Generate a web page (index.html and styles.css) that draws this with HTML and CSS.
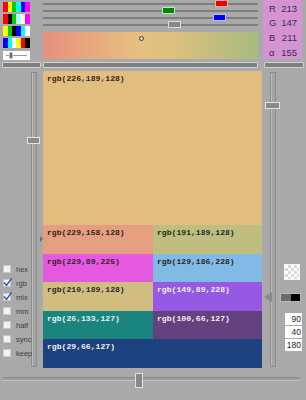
FILE: index.html
```html
<!DOCTYPE html>
<html lang="en">
<head>
  <meta charset="UTF-8" />
  <title>Color Mixer</title>
  <link rel="stylesheet" href="styles.css">
</head>
<body>
<div class="app">
  <div class="top">
    <div class="swatches">
      <div class="swatch sw1"></div>
      <div class="swatch sw2"></div>
      <div class="swatch sw3"></div>
      <div class="swatch sw4"></div>
      <div class="mini-slider">
        <span class="mini-thumb"></span>
      </div>
    </div>

    <div class="mixer">
      <div class="track-row"><span class="hthumb red" style="left: 172px"></span></div>
      <div class="track-row"><span class="hthumb green" style="left: 119px"></span></div>
      <div class="track-row"><span class="hthumb blue" style="left: 170px"></span></div>
      <div class="track-row"><span class="hthumb gray" style="left: 125px"></span></div>
      <div class="gradient">
        <span class="marker" style="left: 96px; top: 4px"></span>
      </div>
    </div>

    <div class="info">
      <div class="info-row"><span>R</span><span>213</span></div>
      <div class="info-row"><span>G</span><span>147</span></div>
      <div class="info-row"><span>B</span><span>211</span></div>
      <div class="info-row"><span>&alpha;</span><span>155</span></div>
    </div>
  </div>

  <div class="scrolls">
    <div class="sbar sbar-left"></div>
    <div class="sbar sbar-mid"></div>
    <div class="sbar sbar-right"></div>
  </div>

  <div class="middle">
    <div class="side side-left">
      <div class="options">
        <label class="opt"><span class="box"></span>hex</label>
        <label class="opt"><span class="box"><svg width="9" height="9" viewBox="0 0 9 9"><polyline points="1,4.5 3.5,7.5 8.5,0.5" /></svg></span>rgb</label>
        <label class="opt"><span class="box"><svg width="9" height="9" viewBox="0 0 9 9"><polyline points="1,4.5 3.5,7.5 8.5,0.5" /></svg></span>mix</label>
        <label class="opt"><span class="box"></span>mm</label>
        <label class="opt"><span class="box"></span>half</label>
        <label class="opt"><span class="box"></span>sync</label>
        <label class="opt"><span class="box"></span>keep</label>
      </div>
      <div class="vslider">
        <div class="vtrack"></div>
        <span class="vthumb" style="top: 66px"></span>
      </div>
      <span class="pointer-small"></span>
    </div>

    <div class="blocks">
      <div class="block wide big" style="background: rgb(226,189,128)">rgb(226,189,128)</div>
      <div class="block" style="background: rgb(229,158,128)">rgb(229,158,128)</div>
      <div class="block" style="background: rgb(191,189,128)">rgb(191,189,128)</div>
      <div class="block" style="background: rgb(229,89,225)">rgb(229,89,225)</div>
      <div class="block" style="background: rgb(129,186,228)">rgb(129,186,228)</div>
      <div class="block" style="background: rgb(210,189,128)">rgb(210,189,128)</div>
      <div class="block light" style="background: rgb(149,89,228)">rgb(149,89,228)</div>
      <div class="block light" style="background: rgb(26,133,127)">rgb(26,133,127)</div>
      <div class="block light" style="background: rgb(100,66,127)">rgb(100,66,127)</div>
      <div class="block light wide" style="background: rgb(29,66,127)">rgb(29,66,127)</div>
    </div>

    <div class="side side-right">
      <div class="vslider vslider-right">
        <div class="vtrack"></div>
        <span class="vthumb" style="top: 31px"></span>
      </div>
      <span class="pointer"></span>
      <div class="tools">
        <div class="checker"></div>
        <div class="toggle"><span class="tg-off"></span><span class="tg-on"></span></div>
        <div class="num">90</div>
        <div class="num">40</div>
        <div class="num">180</div>
      </div>
    </div>
  </div>

  <div class="bottom">
    <div class="htrack">
      <span class="bthumb" style="left: 132px"></span>
    </div>
  </div>
</div>
</body>
</html>
```

FILE: styles.css
```css
* {
  box-sizing: border-box;
}

body {
  margin: 0;
  background: #a9a9a9;
  font-family: "Liberation Sans", Arial, sans-serif;
  width: 306px;
  height: 400px;
  overflow: hidden;
}

.app {
  display: flex;
  flex-direction: column;
  height: 400px;
}

/* top strip: palettes, rgb sliders, readout */
.top {
  display: flex;
  height: 60px;
}

.swatches {
  width: 43px;
  flex-shrink: 0;
  padding: 2px 0 0 3px;
  display: flex;
  flex-direction: column;
  gap: 2px;
}

.swatch {
  width: 27px;
  height: 10px;
}

.sw1 {
  background: linear-gradient(to right, #f00 0 17%, #ff0 17% 33%, #0c0 33% 50%, #0ff 50% 67%, #00f 67% 83%, #f0f 83%);
}

.sw2 {
  background: linear-gradient(to right, #f00 0 17%, #000 17% 33%, #0c0 33% 50%, #bff 50% 67%, #fff 67% 83%, #f0f 83%);
}

.sw3 {
  background: linear-gradient(to right, #ff0 0 17%, #0c0 17% 33%, #000 33% 50%, #00f 50% 67%, #0ff 67% 83%, #fff 83%);
}

.sw4 {
  background: linear-gradient(to right, #00f 0 17%, #0ff 17% 33%, #fff 33% 50%, #ff0 50% 67%, #f00 67% 83%, #000 83%);
}

.mini-slider {
  width: 27px;
  height: 9px;
  margin-top: 1px;
  background: #fff;
  position: relative;
}

.mini-slider::before {
  content: "";
  position: absolute;
  left: 3px;
  right: 3px;
  top: 4px;
  height: 1px;
  background: #999;
}

.mini-thumb {
  position: absolute;
  left: 6px;
  top: 1px;
  width: 4px;
  height: 7px;
  background: #666;
  border: 1px solid #ccc;
}

.mixer {
  width: 215px;
  flex-shrink: 0;
}

.track-row {
  height: 7px;
  position: relative;
}

.track-row::before {
  content: "";
  position: absolute;
  left: 0;
  right: 0;
  top: 3px;
  height: 2px;
  background: #7d7d7d;
}

.hthumb {
  position: absolute;
  top: 0;
  width: 13px;
  height: 7px;
  border: 1px solid #ddd;
  z-index: 2;
}

.hthumb.red { background: #e00; border-color: #f3b0b0; }
.hthumb.green { background: #080; border-color: #c8e0c8; }
.hthumb.blue { background: #00f; border-color: #c0c0f0; }
.hthumb.gray { background: #888; border-color: #ddd; }

.gradient {
  height: 27px;
  margin-top: 4px;
  position: relative;
  background: linear-gradient(to right, #e78e80 0%, #e8a87e 22%, #e7c07f 45%, #d8c07e 65%, #a7bb7d 100%);
}

.marker {
  position: absolute;
  width: 5px;
  height: 5px;
  border-radius: 50%;
  border: 1px solid #333;
  background: #f4e6c8;
}

.info {
  width: 39px;
  height: 59px;
  margin-left: 5px;
  padding: 1px 5px 0 6px;
  background: rgb(213,147,211);
  color: #3a2b56;
  font-size: 9.5px;
}

.info-row {
  height: 14.6px;
  display: flex;
  align-items: center;
  justify-content: space-between;
}

/* scroll bars */
.scrolls {
  display: flex;
  height: 6px;
  margin-top: 2px;
}

.sbar {
  height: 6px;
  background: #7f7f7f;
  border: 1px solid #d2d2d2;
  border-radius: 1px;
}

.sbar-left { margin-left: 2px; width: 39px; }
.sbar-mid { margin-left: 2px; width: 215px; }
.sbar-right { margin-left: 6px; width: 40px; }

/* main area */
.middle {
  display: grid;
  grid-template-columns: 43px 219px 44px;
  height: 297px;
  margin-top: 3px;
}

.side {
  position: relative;
  display: flex;
}

.options {
  width: 27px;
  display: flex;
  flex-direction: column;
  justify-content: flex-end;
  padding: 0 0 8px 3px;
  white-space: nowrap;
  position: relative;
  z-index: 3;
}

.opt {
  height: 14px;
  display: flex;
  align-items: center;
  gap: 5px;
  font-size: 7.5px;
  color: #3d3d3d;
}

.box {
  width: 8px;
  height: 8px;
  flex-shrink: 0;
  background: #f2f2f2;
  border: 1px solid #c9c9c9;
  position: relative;
}

.box svg {
  position: absolute;
  left: -1px;
  top: -2px;
  overflow: visible;
}

.box polyline {
  fill: none;
  stroke: #2f4fc0;
  stroke-width: 1.3;
}

.vslider {
  width: 13px;
  position: relative;
  padding: 1px 0;
}

.vslider-right {
  width: 15px;
  margin-left: 3px;
}

.vtrack {
  width: 6px;
  height: 100%;
  margin: 0 auto;
  background: #a3a3a3;
  border: 1px solid #8c8c8c;
  box-shadow: inset 1px 0 0 #bdbdbd;
}

.vthumb {
  position: absolute;
  left: 0;
  width: 100%;
  height: 7px;
  background: #8a8a8a;
  border: 1px solid #e2e2e2;
}

.pointer-small {
  position: absolute;
  left: 40px;
  top: 165px;
  border-left: 3px solid #6f6f6f;
  border-top: 3px solid transparent;
  border-bottom: 3px solid transparent;
}

.pointer {
  position: absolute;
  left: 2px;
  top: 221px;
  border-right: 8px solid #8a8a8a;
  border-top: 5.5px solid transparent;
  border-bottom: 5.5px solid transparent;
}

.tools {
  display: flex;
  flex-direction: column;
  padding-top: 193px;
}

.checker {
  width: 16px;
  height: 16px;
  margin-left: 4px;
  border: 1px solid #f4f4f4;
  background-color: #fff;
  background-image:
    linear-gradient(45deg, #d8d8d8 25%, transparent 25% 75%, #d8d8d8 75%),
    linear-gradient(45deg, #d8d8d8 25%, transparent 25% 75%, #d8d8d8 75%);
  background-size: 6px 6px;
  background-position: 0 0, 3px 3px;
}

.toggle {
  display: flex;
  width: 21px;
  height: 9px;
  margin-top: 13px;
  border: 1px solid #b8b8b8;
}

.tg-off {
  flex: 1;
  background: #6a6a6a;
}

.tg-on {
  flex: 1;
  background: #000;
}

.num {
  width: 17px;
  height: 12px;
  margin: 1px 0 0 5px;
  background: #fff;
  color: #222;
  font-size: 8.5px;
  line-height: 12px;
  text-align: right;
  padding-right: 1px;
}

.toggle + .num {
  margin-top: 11px;
}

/* colour blocks */
.blocks {
  display: grid;
  grid-template-columns: 110px 109px;
  grid-template-rows: 154px repeat(5, 1fr);
}

.block {
  font-family: "Liberation Mono", "Courier New", monospace;
  font-weight: bold;
  font-size: 8.1px;
  line-height: 10px;
  padding: 3px 4px;
  color: #2b2620;
  white-space: nowrap;
  overflow: hidden;
}

.block.wide {
  grid-column: span 2;
}

.block.light {
  color: #f2f2f2;
}

/* bottom slider */
.bottom {
  flex: 1;
  padding: 9px 6px 0 3px;
}

.htrack {
  height: 4px;
  position: relative;
  background: #9d9d9d;
  border-top: 1px solid #8a8a8a;
  border-bottom: 1px solid #c2c2c2;
}

.bthumb {
  position: absolute;
  top: -5px;
  width: 8px;
  height: 15px;
  background: #888;
  border: 1px solid #e0e0e0;
}
```
